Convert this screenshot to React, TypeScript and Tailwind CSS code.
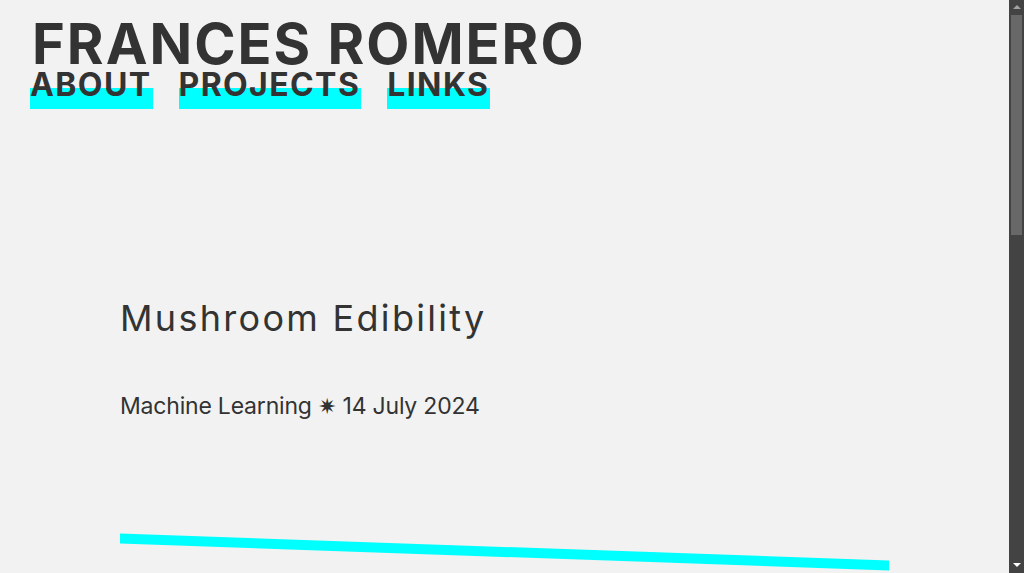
const links = ['ABOUT', 'PROJECTS', 'LINKS']

export default function App() {
  return (
    <div className="flex h-screen overflow-hidden bg-[#f2f2f2] text-[#333] font-['Inter','DejaVu_Sans',sans-serif]">
      <div className="flex-1 min-w-0">
        {/* header */}
        <header className="pt-[19px]">
          <h1 className="pl-[32px] text-[56px] leading-[50px] font-bold tracking-[2px]">FRANCES ROMERO</h1>
          <nav className="flex gap-[26px] pl-[30px]">
            {links.map((l) => (
              <a
                key={l}
                href="#"
                className="block text-[32px] leading-[32px] font-bold tracking-[1.4px] pr-[1px] pb-[8px] bg-[linear-gradient(transparent_19px,#0ff_19px)]"
              >
                {l}
              </a>
            ))}
          </nav>
        </header>

        {/* post */}
        <main className="mx-[120px] pt-[187px]">
          <h2 className="text-[36px] leading-[44px] font-normal tracking-[2.3px]">Mushroom Edibility</h2>
          <p className="mt-[50px] text-[23px] leading-[32px] tracking-[-0.2px]">
            Machine Learning <span className="font-['DejaVu_Sans'] text-[22px]">✷</span> 14 July 2024
          </p>
          <div className="mt-[124px] h-[10px] bg-[#0ff] skew-y-2" />
        </main>
      </div>

      {/* scrollbar */}
      <div className="w-[15px] shrink-0 bg-[#434343] flex flex-col items-center">
        <div className="mt-[5px] h-0 w-0 border-x-[4px] border-b-[4px] border-x-transparent border-b-[#a3a3a3]" />
        <div className="mt-[6px] h-[220px] w-[11px] bg-[#686868]" />
        <div className="mt-auto mb-[6px] h-0 w-0 border-x-[4px] border-t-[4px] border-x-transparent border-t-white" />
      </div>
    </div>
  )
}
